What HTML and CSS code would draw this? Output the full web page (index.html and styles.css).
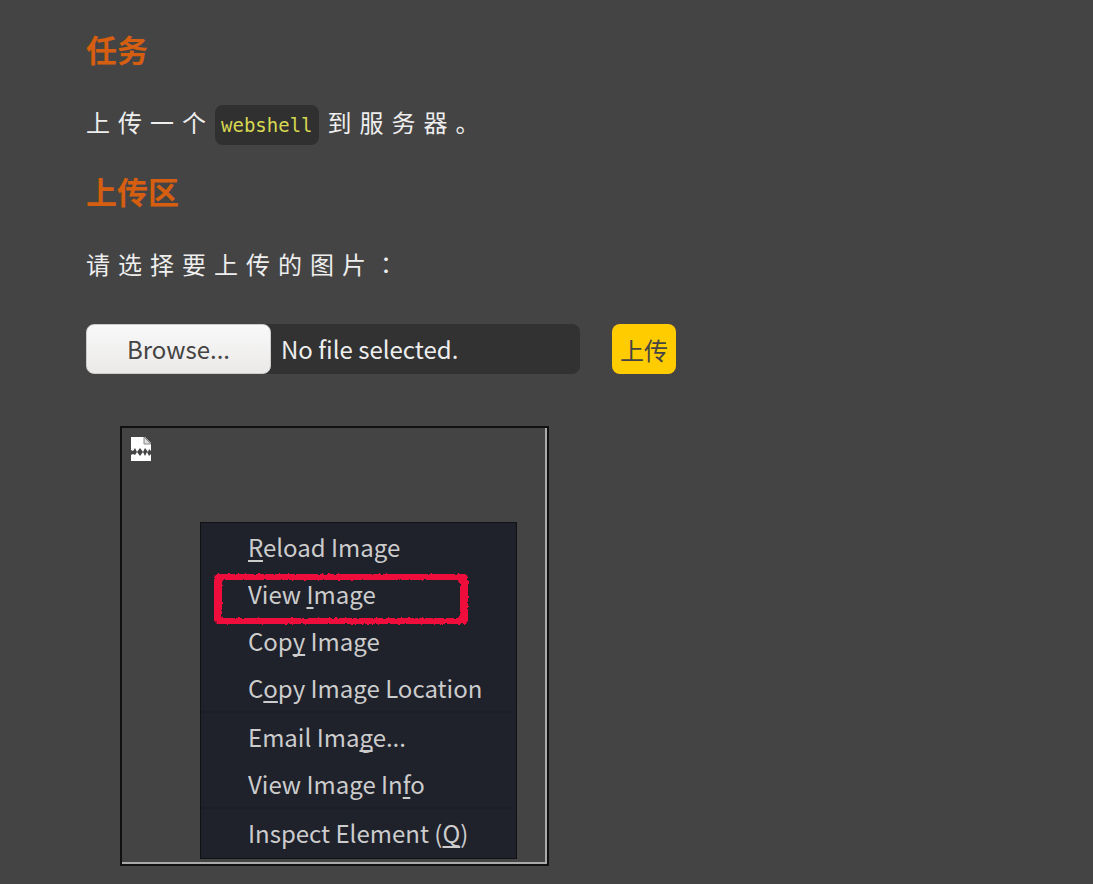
FILE: index.html
```html
<!DOCTYPE html>
<html lang="zh">
<head>
    <meta charset="UTF-8">
    <meta name="viewport" content="width=device-width, initial-scale=1.0">
    <title>上传区</title>
    <link rel="stylesheet" href="styles.css">
</head>
<body>

    <main class="page">
        <h3>任务</h3>
        <p>上传一个<code>webshell</code>到服务器。</p>

        <h3>上传区</h3>
        <p>请选择要上传的图片<span lang="ja">：</span></p>

        <form class="upload-form">
            <label class="file-box" for="uploadFile">
                <span class="browse">Browse...</span>
                <span class="file-name">No file selected.</span>
                <input type="file" id="uploadFile" name="upload_file">
            </label>
            <button type="submit" class="submit-btn">上传</button>
        </form>

        <div class="preview">
            <!-- broken image icon -->
            <svg class="broken" width="22" height="26" viewBox="0 0 22 26">
                <path d="M1 1h14l6 6v8l-2-2-1 3-3-4-2 4-3-4-3 4-2-4-2 3-2-1z" fill="#fff"/>
                <path d="M14 1v7h7z" fill="#ddd" stroke="#888" stroke-width="1"/>
                <path d="M1 19l2-1 2 1 2-3 3 4 3-4 2 4 2-4 2 4 2-2v7H1z" fill="#fff"/>
            </svg>

            <div class="menu" role="menu">
                <button type="button" role="menuitem"><u>R</u>eload Image</button>
                <button type="button" role="menuitem">View <u>I</u>mage</button>
                <button type="button" role="menuitem">Cop<u>y</u> Image</button>
                <button type="button" role="menuitem">C<u>o</u>py Image Location</button>
                <hr>
                <button type="button" role="menuitem">Email Ima<u>g</u>e...</button>
                <button type="button" role="menuitem">View Image In<u>f</u>o</button>
                <hr>
                <button type="button" role="menuitem">Inspect Element (<u>Q</u>)</button>

                <!-- red marker round View Image -->
                <svg class="marker" width="260" height="56" viewBox="0 0 260 56">
                    <filter id="rough" x="-5%" y="-10%" width="110%" height="120%">
                        <feTurbulence type="fractalNoise" baseFrequency="0.3" numOctaves="2" seed="7"/>
                        <feDisplacementMap in="SourceGraphic" scale="3" xChannelSelector="R" yChannelSelector="G"/>
                    </filter>
                    <path d="M6 3h248l3 3v44l-3 3H6l-3-3V6zM12 9l-1 3v32l1 3h235l2-3V12l-2-3z" fill="#ee0a3a" fill-rule="evenodd" filter="url(#rough)"/>
                </svg>
            </div>
        </div>
    </main>

</body>
</html>
```

FILE: styles.css
```css
* {
    box-sizing: border-box;
}
body {
    margin: 0;
    background-color: #444;
    color: #eee;
    font-family: "Noto Sans CJK SC", sans-serif;
    font-size: 24px;
}
.page {
    padding: 25px 86px 18px;
}
h3 {
    margin: 0;
    color: #d55e10;
    font-size: 31px;
    line-height: 48px;
}
p {
    margin: 27px 0 22px;
    font-size: 24px;
    line-height: 44px;
    letter-spacing: 8px;
}
p span {
    font-family: "Noto Sans CJK JP", sans-serif;
}
code {
    display: inline-block;
    margin: 0 9px 0 1px;
    padding: 0 6px;
    border-radius: 8px;
    background: #303030;
    color: #d8d850;
    font-family: "DejaVu Sans Mono", monospace;
    font-size: 19px;
    line-height: 40px;
    letter-spacing: 0;
}
.upload-form {
    display: flex;
    flex-wrap: wrap;
    gap: 32px;
    margin-top: 38px;
}
.file-box {
    position: relative;
    display: flex;
    width: 494px;
    border-radius: 8px;
    background: #323232;
    line-height: 50px;
}
.browse {
    width: 185px;
    border: 1px solid #ccc;
    border-radius: 8px;
    background: linear-gradient(#f9f9f9, #ebe9e8);
    color: #444;
    line-height: 48px;
    text-align: center;
}
.file-name {
    padding-left: 10px;
}
.file-box input {
    position: absolute;
    inset: 0;
    width: 100%;
    opacity: 0;
    cursor: pointer;
}
.submit-btn {
    height: 50px;
    padding: 0 8px;
    border: none;
    border-radius: 8px;
    background: #fc0;
    color: #444;
    font-family: inherit;
    font-size: 24px;
    cursor: pointer;
}
.preview {
    position: relative;
    max-width: 429px;
    min-height: 440px;
    margin: 52px 0 0 34px;
    padding: 8px;
    border: 2px solid #111;
    box-shadow: inset -2px -2px 0 #aaa;
}
.broken {
    display: block;
}
.menu {
    position: absolute;
    top: 94px;
    left: 78px;
    width: 317px;
    padding-bottom: 2px;
    border: 1px solid #111;
    background: #1f212b;
}
.menu button {
    display: block;
    width: 100%;
    padding: 0 0 0 47px;
    border: none;
    background: none;
    color: #ccc;
    font-family: inherit;
    font-size: 24px;
    line-height: 47px;
    text-align: left;
}
.menu u {
    text-decoration-thickness: 2px;
    text-underline-offset: 3px;
    text-decoration-skip-ink: none;
}
.menu hr {
    height: 2px;
    margin: 0;
    border: none;
    background: #1d1f28;
}
.marker {
    position: absolute;
    top: 48px;
    left: 10px;
    pointer-events: none;
}
```
